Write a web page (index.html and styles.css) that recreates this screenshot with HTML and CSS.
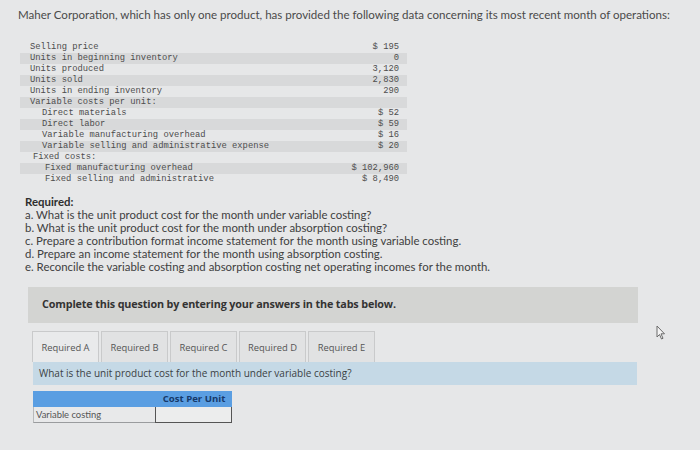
FILE: index.html
```html
<!DOCTYPE html>
<html>
<head>
<meta charset="utf-8">
<link rel="stylesheet" href="styles.css">
</head>
<body>
<div class="page">
  <p class="intro">Maher Corporation, which has only one product, has provided the following data concerning its most recent month of operations:</p>

  <div class="data">
    <div class="row"><span class="lbl">Selling price</span><span class="val">$ 195</span></div>
    <div class="row alt"><span class="lbl">Units in beginning inventory</span><span class="val">0</span></div>
    <div class="row"><span class="lbl">Units produced</span><span class="val">3,120</span></div>
    <div class="row alt"><span class="lbl">Units sold</span><span class="val">2,830</span></div>
    <div class="row"><span class="lbl">Units in ending inventory</span><span class="val">290</span></div>
    <div class="row alt"><span class="lbl">Variable costs per unit:</span><span class="val"></span></div>
    <div class="row"><span class="lbl ind">Direct materials</span><span class="val">$ 52</span></div>
    <div class="row alt"><span class="lbl ind">Direct labor</span><span class="val">$ 59</span></div>
    <div class="row"><span class="lbl ind">Variable manufacturing overhead</span><span class="val">$ 16</span></div>
    <div class="row alt"><span class="lbl ind">Variable selling and administrative expense</span><span class="val">$ 20</span></div>
    <div class="row"><span class="lbl sub">Fixed costs:</span><span class="val"></span></div>
    <div class="row alt"><span class="lbl ind2">Fixed manufacturing overhead</span><span class="val">$ 102,960</span></div>
    <div class="row"><span class="lbl ind2">Fixed selling and administrative</span><span class="val">$ 8,490</span></div>
  </div>

  <div class="required">
    <p class="req-title">Required:</p>
    <p>a. What is the unit product cost for the month under variable costing?</p>
    <p>b. What is the unit product cost for the month under absorption costing?</p>
    <p>c. Prepare a contribution format income statement for the month using variable costing.</p>
    <p>d. Prepare an income statement for the month using absorption costing.</p>
    <p>e. Reconcile the variable costing and absorption costing net operating incomes for the month.</p>
  </div>

  <div class="instr">Complete this question by entering your answers in the tabs below.</div>

  <div class="tabs">
    <div class="tab active">Required A</div>
    <div class="tab">Required B</div>
    <div class="tab">Required C</div>
    <div class="tab">Required D</div>
    <div class="tab">Required E</div>
  </div>
  <div class="qbar">What is the unit product cost for the month under variable costing?</div>

  <div class="answer">
    <div class="ahead blank"></div>
    <div class="ahead">Cost Per Unit</div>
    <div class="acell label">Variable costing</div>
    <div class="acell input"></div>
  </div>

  <svg class="cursor" width="10" height="15" viewBox="0 0 10 15">
    <path d="M1 1 L1 12 L3.5 9.5 L5.5 14 L7 13.3 L5 8.8 L8.5 8.8 Z" fill="#f4f4f4" stroke="#6a6a6a" stroke-width="1"/>
  </svg>
</div>
</body>
</html>
```

FILE: styles.css
```css
html, body {
  margin: 0;
  padding: 0;
  background: #e6e7e8;
}
.page {
  position: relative;
  width: 700px;
  height: 450px;
  overflow: hidden;
  font-family: Lato, "Liberation Sans", sans-serif;
  color: #3c3c3c;
}
.intro {
  margin: 0;
  padding: 8px 0 0 18px;
  font-size: 11.55px;
  line-height: 14px;
  color: #4a4a4a;
  white-space: nowrap;
}
.data {
  margin: 20px 0 0 20px;
  width: 387px;
  font-family: "Liberation Mono", monospace;
  font-size: 8.8px;
  color: #4d4d4d;
}
.row {
  display: flex;
  justify-content: space-between;
  height: 11px;
  line-height: 11px;
}
.row.alt {
  background: #d8d9da;
}
.lbl {
  padding-left: 10px;
  white-space: pre;
}
.lbl.sub { padding-left: 13px; }
.lbl.ind { padding-left: 22px; }
.lbl.ind2 { padding-left: 25px; }
.val {
  padding-right: 8px;
}
.required {
  margin: 11px 0 0 25px;
  font-size: 11.4px;
  line-height: 12.9px;
  color: #404040;
  white-space: nowrap;
}
.required p {
  margin: 0;
}
.required .req-title {
  font-weight: bold;
  color: #2e2e2e;
}
.instr {
  margin: 14px 0 0 28px;
  width: 596px;
  height: 36px;
  padding-left: 14px;
  background: #d3d4d2;
  font-family: "Open Sans", sans-serif;
  font-weight: 700;
  font-size: 10.8px;
  line-height: 34px;
  color: #333;
  letter-spacing: -0.15px;
  white-space: nowrap;
}
.tabs {
  display: flex;
  gap: 2px;
  margin: 8px 0 0 32px;
  height: 31px;
}
.tab {
  width: 65px;
  border: 1px solid #c9cacb;
  border-bottom: none;
  background: #e1e2e3;
  font-family: "Open Sans", sans-serif;
  font-size: 9.4px;
  color: #555;
  text-align: center;
  line-height: 31px;
}
.tab.active {
  background: #e9eaeb;
}
.qbar {
  margin-left: 33px;
  width: 598px;
  height: 23px;
  padding-left: 6px;
  background: #c5d9e6;
  font-family: "Open Sans", sans-serif;
  font-size: 10px;
  line-height: 22px;
  color: #3b3f44;
  white-space: nowrap;
}
.answer {
  display: grid;
  grid-template-columns: 122px 77px;
  margin: 6px 0 0 33px;
  width: 199px;
}
.ahead {
  height: 16px;
  background: #5a9ee2;
  color: #16396a;
  font-family: "Open Sans", sans-serif;
  font-weight: 700;
  font-size: 9.6px;
  line-height: 16px;
  text-align: center;
  border-left: 1px solid #5a9ee2;
}
.ahead.blank {
  border-left: none;
}
.acell {
  height: 15px;
  border-bottom: 1px solid #9a9c9e;
  font-size: 9.4px;
  line-height: 15px;
  color: #555;
}
.acell.label {
  padding-left: 2px;
  border-left: 1px solid #b8babb;
  background: #e8e9ea;
}
.acell.input {
  border-left: 1px solid #555;
  border-right: 1px solid #555;
  border-bottom: 1px solid #555;
  background: #eceded;
}
.cursor {
  position: absolute;
  left: 656px;
  top: 325px;
}
```
